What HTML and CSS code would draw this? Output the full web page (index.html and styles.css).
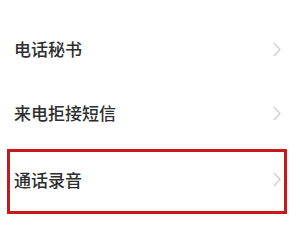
FILE: index.html
```html
<!DOCTYPE html>
<html lang="zh-CN">
<head>
<meta charset="utf-8">
<link rel="stylesheet" href="styles.css">
</head>
<body>
<div class="list">
  <div class="row">
    <span class="label">电话秘书</span>
    <svg class="chev" width="8" height="15" viewBox="0 0 8 15"><polyline points="1,1 7,7.5 1,14" fill="none" stroke="#d2d2d2" stroke-width="1.6"/></svg>
  </div>
  <div class="row">
    <span class="label">来电拒接短信</span>
    <svg class="chev" width="8" height="15" viewBox="0 0 8 15"><polyline points="1,1 7,7.5 1,14" fill="none" stroke="#d2d2d2" stroke-width="1.6"/></svg>
  </div>
  <div class="row highlight">
    <span class="label">通话录音</span>
    <svg class="chev" width="8" height="15" viewBox="0 0 8 15"><polyline points="1,1 7,7.5 1,14" fill="none" stroke="#d2d2d2" stroke-width="1.6"/></svg>
  </div>
</div>
</body>
</html>
```
FILE: styles.css
```css
html, body {
  margin: 0;
  padding: 0;
  background: #ffffff;
  width: 300px;
  height: 225px;
  overflow: hidden;
}
.list {
  padding-top: 17px;
  font-family: "Noto Sans CJK SC", "Noto Sans", sans-serif;
}
.row {
  height: 64px;
  box-sizing: border-box;
  display: flex;
  align-items: center;
  justify-content: space-between;
  padding: 0 19px 0 14px;
}
.label {
  font-size: 17px;
  line-height: 20px;
  font-weight: 500;
  color: #2e2e2e;
}
.chev {
  display: block;
}
.row.highlight {
  height: 65px;
  margin: 4px 13px 0 7px;
  border: 3px solid #c8181c;
  padding: 0 3px 4px 4px;
}
```
